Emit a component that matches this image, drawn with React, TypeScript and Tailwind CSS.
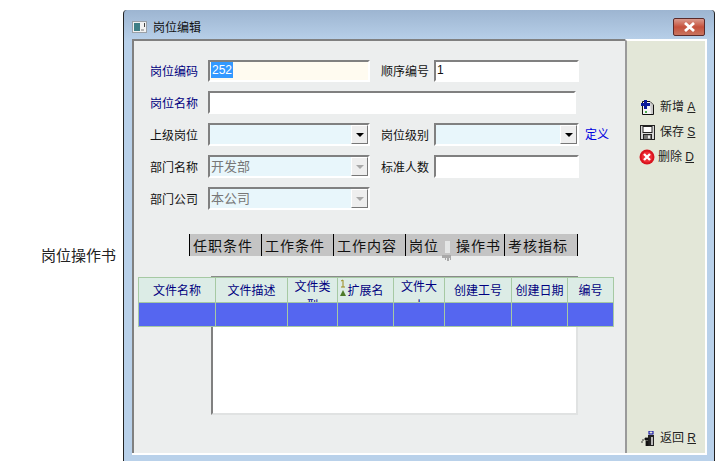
const cjk = "font-['Liberation_Sans','Noto_Sans_CJK_SC',sans-serif]"

const inputEdge = 'border-2 border-t-[#808080] border-l-[#808080] border-r-white border-b-white'

function Label({ children, blue }: { children: string; blue?: boolean }) {
  return <span className={`w-[58px] shrink-0 pt-[2px] text-xs leading-none ${blue ? 'text-[#000080]' : 'text-[#111]'}`}>{children}</span>
}

function ComboBox({ value, disabled, className }: { value?: string; disabled?: boolean; className: string }) {
  return (
    <div className={`flex h-[23px] items-stretch bg-[#e8f6fb] ${inputEdge} ${className}`}>
      <span className="flex-1 pl-[1px] text-[13px] leading-[19px] text-[#777]">{value}</span>
      <span className="flex w-[17px] items-center justify-center border border-t-white border-l-white border-r-[#777] border-b-[#777] bg-[#eeeeee]">
        <span
          className={`h-0 w-0 border-x-[4px] border-t-[4px] border-x-transparent ${disabled ? 'border-t-[#a8a8a8]' : 'border-t-black'}`}
        />
      </span>
    </div>
  )
}

function SideButton({ icon, label, hotkey, gap }: { icon: React.ReactNode; label: string; hotkey: string; gap: string }) {
  return (
    <div className={`flex h-[16px] items-center ${gap} text-xs leading-none text-[#222]`}>
      {icon}
      <span>
        {label} <span className="underline">{hotkey}</span>
      </span>
    </div>
  )
}

const tabs = [
  { label: '任职条件', w: 'w-[72px]' },
  { label: '工作条件', w: 'w-[72px]' },
  { label: '工作内容', w: 'w-[72px]' },
  { label: '岗位说操作书', w: 'w-[99px]', hidden: true },
  { label: '考核指标', w: 'w-[73px]' },
]

const columns = ['文件名称', '文件描述', '文件类型', '扩展名', '文件大小', '创建工号', '创建日期', '编号']

export default function App() {
  return (
    <div className={`flex h-[468px] w-[723px] overflow-hidden bg-white ${cjk}`}>
      <div className="w-[123px] shrink-0 pt-[248px] pl-[41px] text-[15px] leading-4 text-[#222]">岗位操作书</div>

      <div className="mt-[10px] flex h-[451px] w-[592px] flex-col rounded-t-[4px] border-x border-x-[#222] bg-[#b9d1ea] bg-gradient-to-b from-[#9db5d1] from-0% to-[#b9d1ea] to-[7%]">
        <div className="flex h-[29px] shrink-0 items-center pt-[4px] pl-[8px]">
          <svg width="15" height="12" viewBox="0 0 15 12">
            <rect x="0.5" y="0.5" width="14" height="11" fill="#f2f2f2" stroke="#9aa0a6" />
            <rect x="2" y="2" width="6" height="8" fill="#3f7f86" />
            <rect x="9" y="8" width="3" height="2" fill="#b5b5b5" />
            <rect x="12" y="2" width="1" height="4" fill="#444" />
          </svg>
          <span className="ml-[6px] pt-[3px] text-xs leading-none text-[#111]">岗位编辑</span>
          <div className="mr-[9px] ml-auto flex h-[18px] w-[32px] items-center justify-center rounded-[2px] border border-[#5a2a2a] bg-gradient-to-b from-[#d99a8e] via-[#c5503c] to-[#c8745f]">
            <svg width="15" height="10" viewBox="0 0 15 10">
              <path d="M3 1 L12 9 M12 1 L3 9" stroke="#fff" strokeWidth="2.8" />
            </svg>
          </div>
        </div>

        <div className="mr-[7px] ml-[8px] flex h-[416px] border-b-2 border-b-white">
          <div className="relative w-[493px] shrink-0 border-t-2 border-l-2 border-t-[#808080] border-l-[#808080] bg-[#eceeee]">
            <div className="flex flex-col pt-[19px] pl-[16px]">
              <div className="flex h-[22px] items-center">
                <Label blue>岗位编码</Label>
                <div className={`h-[22px] w-[162px] bg-[#fffbf0] pl-[1px] text-xs leading-[17px] ${inputEdge}`}>
                  <span className="inline-block h-[16px] bg-[#3399ff] px-[1px] text-white">252</span>
                </div>
                <span className="ml-[11px] w-[53px] pt-[2px] text-xs leading-none text-[#111]">顺序编号</span>
                <div className={`h-[22px] w-[145px] bg-white pl-[1px] text-xs leading-[17px] text-[#111] ${inputEdge}`}>1</div>
              </div>

              <div className="mt-[9px] flex h-[23px] items-center">
                <Label blue>岗位名称</Label>
                <div className={`h-[23px] w-[368px] bg-white ${inputEdge}`} />
              </div>

              <div className="mt-[9px] flex h-[23px] items-center">
                <Label>上级岗位</Label>
                <ComboBox className="w-[162px]" />
                <span className="ml-[11px] w-[53px] pt-[2px] text-xs leading-none text-[#111]">岗位级别</span>
                <ComboBox className="w-[145px]" />
                <span className="ml-[6px] text-xs leading-none text-[#0000e0]">定义</span>
              </div>

              <div className="mt-[9px] flex h-[23px] items-center">
                <Label>部门名称</Label>
                <ComboBox value="开发部" disabled className="w-[162px]" />
                <span className="ml-[11px] w-[53px] pt-[2px] text-xs leading-none text-[#111]">标准人数</span>
                <div className={`h-[23px] w-[145px] bg-white ${inputEdge}`} />
              </div>

              <div className="mt-[9px] flex h-[23px] items-center">
                <Label>部门公司</Label>
                <ComboBox value="本公司" disabled className="w-[162px]" />
              </div>
            </div>

            <div className="mt-[24px] ml-[55px] flex h-[22px] w-[389px] bg-[#c4c4c4]">
              {tabs.map((tab) => (
                <div
                  key={tab.label}
                  className={`${tab.w} shrink-0 border-l border-l-black pl-[3px] text-sm leading-[24px] tracking-[1px] whitespace-nowrap text-[#111]`}
                >
                  {tab.hidden ? (
                    <>
                      岗位<span className="inline-block w-[17px]" />操作书
                    </>
                  ) : (
                    tab.label
                  )}
                </div>
              ))}
              <div className="h-[22px] border-l border-l-black" />
            </div>
            <svg className="absolute top-[200px] left-[307px]" width="12" height="22" viewBox="0 0 12 22">
              <path d="M4 0 h5 v12 h-5z" fill="#e4e6e6" />
              <path d="M1 14 h9 v5 h-1 v-2 h-1 v3 h-2 v-3 h-1 v2 h-1 v-2 h-3z" fill="#a9a9a9" />
            </svg>

            <div className="mt-[20px] ml-[77px] h-[1px] w-[367px] bg-[#8a8a8a]" />
            <div className="ml-[4px] grid w-[476px] grid-cols-[77px_72px_50px_56px_51px_67px_56px_46px] border-t border-l border-[#a6c9a3]">
              {columns.map((name, i) => (
                <div
                  key={name}
                  className={`relative h-[25px] overflow-hidden border-r border-b border-[#a6c9a3] bg-[#dcece6] text-center text-xs text-[#000080] ${
                    i === 2 || i === 4 ? 'px-[5px] leading-[19px]' : 'pt-[5px] leading-[16px]'
                  }`}
                >
                  {i === 3 && (
                    <svg className="absolute top-[1px] left-[1px]" width="8" height="18" viewBox="0 0 8 18">
                      <path d="M2 2 L4 1 V8 M2 8 H6" stroke="#9a8a1a" fill="none" />
                      <path d="M4 11 L7 17 H1 Z" fill="#4d7a2a" />
                    </svg>
                  )}
                  <span className="whitespace-normal">{name}</span>
                </div>
              ))}
              {columns.map((name) => (
                <div key={name} className="h-[24px] border-r border-b border-[#a6c9a3] bg-[#5566f0]" />
              ))}
            </div>
            <div className="ml-[77px] h-[88px] w-[367px] border-x-2 border-b-2 border-r-[#e0e2e2] border-b-[#e0e2e2] border-l-[#808080] bg-white" />
          </div>

          <div className="flex flex-1 flex-col border-t-2 border-r-2 border-l-2 border-t-white border-r-white border-l-[#9a9a9a] bg-[#e3e7d8] pt-[58px] pl-[13px]">
            <SideButton
              gap="gap-[5px]"
              label="新增"
              hotkey="A"
              icon={
                <svg width="15" height="16" viewBox="0 0 15 16">
                  <path d="M2.5 2.5 H10 L13.5 6 V15.5 H2.5Z" fill="#f4f4f4" stroke="#111" />
                  <path d="M10 3 L13 6 V15 H11Z" fill="#c9c9c9" />
                  <path d="M1 4 H4 V1 H7 V4 H10 V7 H7 V10 H4 V7 H1Z" fill="#0a1a9a" />
                  <rect x="5" y="12" width="2" height="2" fill="#4caf50" />
                </svg>
              }
            />
            <div className="mt-[9px]">
              <SideButton
                gap="gap-[5px]"
                label="保存"
                hotkey="S"
                icon={
                  <svg width="15" height="15" viewBox="0 0 15 15">
                    <rect x="0.5" y="0.5" width="14" height="14" fill="#d8d8d8" stroke="#222" />
                    <rect x="3" y="1.5" width="9" height="6" fill="#fff" stroke="#222" />
                    <rect x="3.5" y="9.5" width="8" height="5" fill="#777" stroke="#222" />
                    <rect x="8" y="10.5" width="2" height="3" fill="#eee" />
                  </svg>
                }
              />
            </div>
            <div className="mt-[9px] -ml-[1px]">
              <SideButton
                gap="gap-[3px]"
                label="删除"
                hotkey="D"
                icon={
                  <svg width="16" height="16" viewBox="0 0 16 16">
                    <circle cx="8" cy="8" r="7.5" fill="#d8141e" />
                    <circle cx="8" cy="8" r="5.5" fill="#ee2a33" />
                    <path d="M5 5 L11 11 M11 5 L5 11" stroke="#fff" strokeWidth="2.4" />
                  </svg>
                }
              />
            </div>
            <div className="mt-auto mb-[7px]">
              <SideButton
                gap="gap-[5px]"
                label="返回"
                hotkey="R"
                icon={
                  <svg width="15" height="15" viewBox="0 0 15 15">
                    <rect x="9" y="0" width="4" height="3" fill="none" stroke="#0000a0" />
                    <path d="M8 4 H14 V15 H8Z" fill="#222" />
                    <rect x="11" y="6" width="2" height="8" fill="#bbb" />
                    <path d="M2 9 H4 M1 11 H3 M5 7 H8 V9 H5Z M6 10 H8 V15 H6Z" fill="#111" stroke="#111" strokeWidth="0.8" />
                  </svg>
                }
              />
            </div>
          </div>
        </div>
      </div>
    </div>
  )
}
